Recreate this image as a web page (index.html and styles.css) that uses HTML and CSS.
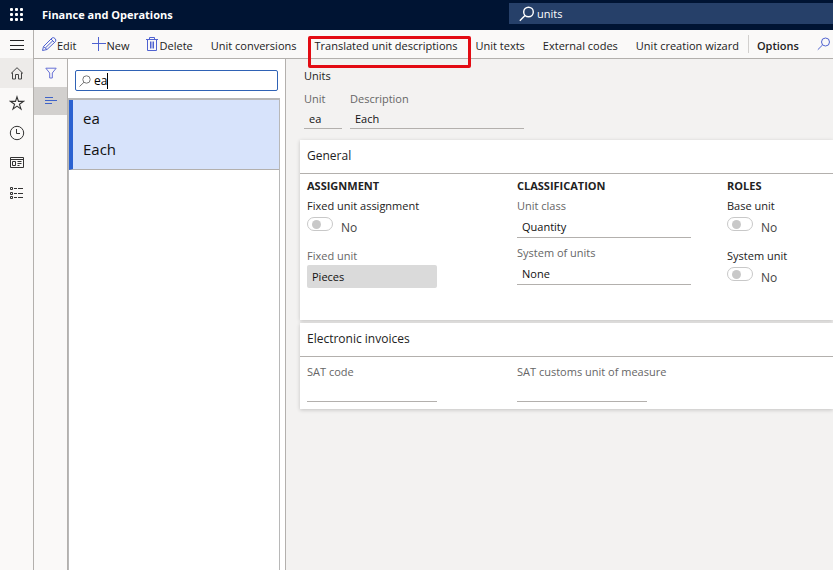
FILE: index.html
```html
<!DOCTYPE html>
<html lang="en">
<head>
<meta charset="utf-8">
<title>Finance and Operations</title>
<link rel="stylesheet" href="styles.css">
</head>
<body>
<header class="topbar">
  <button class="icon-btn waffle" aria-label="App launcher">
    <svg width="16" height="16" viewBox="0 0 16 16" fill="#fff"><rect x="1" y="1" width="3" height="3" rx="1"/><rect x="6" y="1" width="3" height="3" rx="1"/><rect x="11" y="1" width="3" height="3" rx="1"/><rect x="1" y="6" width="3" height="3" rx="1"/><rect x="6" y="6" width="3" height="3" rx="1"/><rect x="11" y="6" width="3" height="3" rx="1"/><rect x="1" y="11" width="3" height="3" rx="1"/><rect x="6" y="11" width="3" height="3" rx="1"/><rect x="11" y="11" width="3" height="3" rx="1"/></svg>
  </button>
  <span class="product">Finance and Operations</span>
  <label class="global-search">
    <svg width="16" height="16" viewBox="0 0 16 16" fill="none" stroke="#fff" stroke-width="1.4"><circle cx="9.500" cy="6" r="4.800"/><path d="M6 9.500L.8 14.700"/></svg>
    <input type="text" value="units" aria-label="Search for a page">
  </label>
</header>
<div class="shell">
  <nav class="rail" aria-label="Main">
    <button class="icon-btn menu" aria-label="Expand navigation"><svg width="16" height="16" viewBox="0 0 16 16" stroke="#222" fill="none"><path d="M1 4.500h14M1 9.500h14M1 13.500h14"/></svg></button>
    <button class="icon-btn active" aria-label="Home"><svg width="16" height="16" viewBox="0 0 16 16" stroke="#444" fill="none"><path d="M2 8.500L8 2.700l6 5.800M3.500 7.500v6.500h3V9.500h3V14h3V7.500"/></svg></button>
    <button class="icon-btn" aria-label="Favorites"><svg width="16" height="16" viewBox="0 0 16 16" stroke="#333" fill="none" stroke-width="1.100"><path d="M8 1.800l1.500 4.600h4.900l-4 2.900 1.600 4.800-4-3-4 3 1.600-4.800-4-2.900h4.900z"/></svg></button>
    <button class="icon-btn" aria-label="Recent"><svg width="16" height="16" viewBox="0 0 16 16" stroke="#333" fill="none"><circle cx="8" cy="8" r="6.700"/><path d="M7.500 4v4.500H11"/></svg></button>
    <button class="icon-btn" aria-label="Workspaces"><svg width="16" height="16" viewBox="0 0 16 16" stroke="#333" fill="none"><path d="M1.500 2.500h13v10h-13zM1.500 4.500h13M3.500 6.500h3v4h-3zM8.500 6.500h4M8.500 8.500h4M8.500 10.500h2"/></svg></button>
    <button class="icon-btn" aria-label="Modules"><svg width="16" height="16" viewBox="0 0 16 16" stroke="#333" fill="none"><path d="M1.500 2.500h2v2h-2zM1.500 7.500h2v2h-2zM1.500 11.500h2v2h-2zM5 3.500h3M9 3.500h5M5 8.500h3M9 8.500h5M5 12.500h3M9 12.500h5"/></svg></button>
  </nav>
  <main class="page">
    <div class="toolbar">
      <div class="record-actions">
        <button class="cmd"><svg width="16" height="16" viewBox="0 0 16 16" stroke="#4f62d0" fill="none"><path d="M1.500 14.500l1-4L11 2q1.500-1 3 .5t.5 3L6 13.500zM2.500 10.500l3.500 3M10 3l3.500 3.500M4.300 12L12 4.500"/></svg><span>Edit</span></button>
        <button class="cmd"><svg width="16" height="16" viewBox="0 0 16 16" stroke="#4f62d0" fill="none"><path d="M7.500 1v14M1 7.500h14"/></svg><span>New</span></button>
        <button class="cmd"><svg width="16" height="16" viewBox="0 0 16 16" stroke="#4f62d0" fill="none"><path d="M2 3.500h12M5.500 3.500v-2h5v2M3.500 3.500v11h9v-11M6.500 5.500v7M8 5.500v7M9.500 5.500v7"/></svg><span>Delete</span></button>
      </div>
      <button class="cmd"><span>Unit conversions</span></button>
      <button class="cmd marked"><span>Translated unit descriptions</span></button>
      <button class="cmd"><span>Unit texts</span></button>
      <button class="cmd"><span>External codes</span></button>
      <button class="cmd"><span>Unit creation wizard</span></button>
      <button class="cmd options"><span>Options</span></button>
      <button class="cmd" aria-label="Search commands"><svg width="14" height="16" viewBox="0 0 14 16" stroke="#4f62d0" fill="none"><circle cx="8.500" cy="6" r="4"/><path d="M5.500 9L.8 13.700"/></svg></button>
    </div>
    <div class="content">
      <div class="pane-tabs">
        <button class="icon-btn" aria-label="Show filters"><svg width="12" height="12" viewBox="0 0 12 12" stroke="#6670d6" fill="none"><path d="M.8 1.200h10.400L7.300 6v5H4.700V6z"/></svg></button>
        <button class="icon-btn selected" aria-label="Show list"><svg width="12" height="12" viewBox="0 0 12 12" stroke="#3f63c8" fill="none"><path d="M0 2.500h8M0 5.500h12M0 8.500h7"/></svg></button>
      </div>
      <section class="list-pane">
        <label class="quick-filter">
          <svg width="12" height="12" viewBox="0 0 12 12" stroke="#777" fill="none"><circle cx="7.500" cy="4.500" r="3.700"/><path d="M5 7.200L.5 11.500"/></svg>
          <span class="entry"><input type="text" value="ea" aria-label="Filter"><span class="caret"></span></span>
        </label>
        <ul class="records">
          <li class="record"><span>ea</span><span>Each</span></li>
        </ul>
      </section>
      <section class="details">
        <div class="title-group">
          <h1>Units</h1>
          <div class="identity">
            <div class="field unit-id"><label for="unit">Unit</label><input id="unit" type="text" value="ea"></div>
            <div class="field unit-desc"><label for="desc">Description</label><input id="desc" type="text" value="Each"></div>
          </div>
        </div>
        <section class="card">
          <h2>General</h2>
          <div class="columns general">
            <div class="column">
              <h3>Assignment</h3>
              <div class="switch"><label for="fixed">Fixed unit assignment</label><div class="switch-row"><input id="fixed" type="checkbox"><span>No</span></div></div>
              <div class="field short readonly"><label for="fixed-unit">Fixed unit</label><input id="fixed-unit" type="text" value="Pieces" readonly></div>
            </div>
            <div class="column">
              <h3>Classification</h3>
              <div class="field"><label for="class">Unit class</label><input id="class" type="text" value="Quantity"></div>
              <div class="field"><label for="system">System of units</label><input id="system" type="text" value="None"></div>
            </div>
            <div class="column">
              <h3>Roles</h3>
              <div class="switch"><label for="base">Base unit</label><div class="switch-row"><input id="base" type="checkbox"><span>No</span></div></div>
              <div class="switch"><label for="sys">System unit</label><div class="switch-row"><input id="sys" type="checkbox"><span>No</span></div></div>
            </div>
          </div>
        </section>
        <section class="card">
          <h2>Electronic invoices</h2>
          <div class="columns invoices">
            <div class="field short"><label for="sat">SAT code</label><input id="sat" type="text"></div>
            <div class="field short"><label for="customs">SAT customs unit of measure</label><input id="customs" type="text"></div>
          </div>
        </section>
      </section>
    </div>
  </main>
</div>
</body>
</html>
```

FILE: styles.css
```css
* { box-sizing: border-box; }
body {
  margin: 0;
  min-height: 100vh;
  display: flex;
  flex-direction: column;
  font: 11px/16px "Open Sans", "Noto Sans", sans-serif;
  color: #222;
}
button, input { font: inherit; color: inherit; border: 0; padding: 0; margin: 0; background: none; border-radius: 0; outline: 0; }
h1, h2, h3, ul { margin: 0; padding: 0; font: inherit; list-style: none; }
svg { display: block; flex: none; }
.icon-btn { display: flex; align-items: center; justify-content: center; width: 100%; height: 30px; }

.topbar { display: flex; align-items: center; height: 30px; background: #001433; color: #fff; }
.topbar .waffle { width: 34px; }
.product { flex: none; width: 475px; padding-left: 8px; font-weight: 700; }
.global-search { flex: 1; display: flex; align-items: center; gap: 2px; height: 21px; margin-top: -3px; padding-left: 10px; background: #264069; }
.global-search input { flex: 1; min-width: 0; }

.shell { flex: 1; display: flex; }
.rail { flex: none; width: 34px; background: #faf9f8; border-right: 1px solid #b3b0ad; }
.rail .menu { height: 28px; }
.rail .active { background: #edebe9; }
.page { flex: 1; min-width: 0; display: flex; flex-direction: column; }

.toolbar { display: flex; align-items: center; gap: 18px; height: 29px; padding-left: 7px; background: #faf9f8; border-bottom: 1px solid #b3b0ad; white-space: nowrap; }
.record-actions { display: flex; gap: 14px; }
.cmd { position: relative; display: flex; align-items: center; flex: none; }
.cmd span { padding-top: 3px; }
.marked::after { content: ""; position: absolute; inset: 1px -13px -14px -7px; border: 3px solid #e30b13; border-radius: 2px; z-index: 2; }
.options { font-weight: 600; }
.options::before { content: ""; position: absolute; left: -9px; top: 0; height: 18px; border-left: 1px solid #d2d0ce; }

.content { flex: 1; display: flex; }
.pane-tabs { flex: none; width: 34px; background: #faf9f8; border-right: 1px solid #b3b0ad; }
.pane-tabs .icon-btn { height: 28px; }
.pane-tabs .selected { background: #d2d0ce; }

.list-pane { flex: none; display: flex; flex-direction: column; width: 218px; background: #fff; border-right: 1px solid #b3b0ad; }
.quick-filter { display: flex; align-items: center; gap: 3px; height: 21px; margin: 11px 7px 7px; padding-left: 3px; border: 1px solid #2f62b5; border-radius: 2px; color: #000; font-size: 12px; }
.entry { position: relative; flex: 1; }
.entry input { width: 100%; }
.caret { position: absolute; left: 13px; top: 0; width: 1px; height: 16px; background: #000; }
.records { flex: 1; margin-right: 5px; border: solid #b8b8b8; border-width: 2px 1px 0; }
.record { display: flex; flex-direction: column; gap: 11px; height: 70px; padding: 8px 0 0 10px; border-left: 4px solid #2b62d1; border-bottom: 1px solid #b3b0ad; background: #d7e3fb; color: #111; font-size: 15px; font-weight: 500; line-height: 20px; }

.details { flex: 1; min-width: 0; padding-left: 14px; background: #f3f2f1; }
.title-group { padding: 9px 0 11px 4px; }
.identity { display: flex; gap: 8px; margin-top: 7px; }
.field { display: flex; flex-direction: column; }
.field label { color: #666; white-space: nowrap; }
.field input { width: 100%; height: 22px; padding: 2px 0 0 5px; border-bottom: 1px solid #b3b0ad; color: #111; }
.unit-id { width: 38px; }
.unit-desc { width: 174px; }

.card { margin-bottom: 3px; background: #fff; box-shadow: 0 1px 4px rgba(0, 0, 0, .2); }
.card h2 { height: 34px; padding-left: 7px; border-bottom: 1px solid #b3b0ad; font-size: 12px; line-height: 32px; }
.columns { display: grid; grid-template-columns: 174px 174px minmax(0, 1fr); column-gap: 36px; padding-left: 7px; }
.general { height: 146px; padding-top: 4px; }
.column { display: flex; flex-direction: column; }
.column h3 { margin-bottom: 4px; font-weight: 700; text-transform: uppercase; }
.column .field input { height: 24px; margin-bottom: 7px; }
.field.short input { width: 130px; }
.column .readonly input { height: 23px; margin-top: 1px; padding-top: 0; background: #dadada; border: 0; border-radius: 2px; }
.switch { height: 50px; }
.switch-row { display: flex; gap: 8px; margin-top: 3px; font-size: 12px; color: #444; }
.switch-row span { padding-top: 3px; }
.switch input { appearance: none; display: flex; align-items: center; width: 26px; height: 14px; padding-left: 4px; border: 1px solid #c8c8c8; border-radius: 7px; }
.switch input::before { content: ""; width: 9px; height: 9px; border-radius: 50%; background: #c8c8c8; }
.invoices { padding-top: 7px; padding-bottom: 7px; }
```
